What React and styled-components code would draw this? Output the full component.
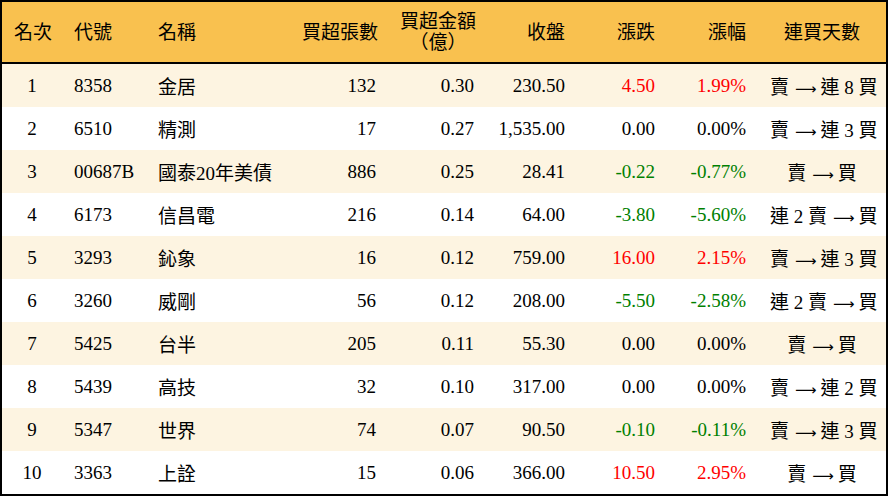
import React from 'react'
import styled, { createGlobalStyle } from 'styled-components'

const GlobalStyle = createGlobalStyle`
  html, body {
    margin: 0;
    padding: 0;
    background: #fff;
  }
  body {
    font-family: "Liberation Serif", "Noto Sans CJK TC", serif;
  }
`

const Frame = styled.div`
  box-sizing: border-box;
  width: 888px;
  height: 496px;
  border: 2px solid #000;
  background: #fff;
`

const Table = styled.table`
  width: 100%;
  table-layout: fixed;
  border-collapse: separate;
  border-spacing: 0;
  font-size: 19px;
  color: #000;
`

const Th = styled.th`
  height: 60px;
  padding: 0 12px;
  background: #f9c14f;
  border-bottom: 2px solid #000;
  font-weight: normal;
  line-height: 21px;
  text-align: ${p => p.$align || 'left'};
  vertical-align: middle;
  white-space: nowrap;
`

const Stack = styled.span`
  display: inline-block;
  text-align: center;
`

const Tr = styled.tr`
  background: ${p => (p.$shaded ? '#fdf4e1' : '#fff')};
`

const Td = styled.td`
  height: 43px;
  padding: 0 12px;
  text-align: ${p => p.$align || 'left'};
  vertical-align: middle;
  white-space: nowrap;
  color: ${p => p.$tone === 'up' ? '#ff0000' : p.$tone === 'down' ? '#008000' : '#000'};
`

const Arrow = styled.span`
  font-family: "DejaVu Sans", sans-serif;
  font-size: 15px;
  margin: 0 4px 0 6px;
`

const widths = [60, 84, 144, 98, 98, 91, 90, 91, 128]

const rows = [
  ['1', '8358', '金居', '132', '0.30', '230.50', '4.50', '1.99%', '賣', '連 8 買'],
  ['2', '6510', '精測', '17', '0.27', '1,535.00', '0.00', '0.00%', '賣', '連 3 買'],
  ['3', '00687B', '國泰20年美債', '886', '0.25', '28.41', '-0.22', '-0.77%', '賣', '買'],
  ['4', '6173', '信昌電', '216', '0.14', '64.00', '-3.80', '-5.60%', '連 2 賣', '買'],
  ['5', '3293', '鈊象', '16', '0.12', '759.00', '16.00', '2.15%', '賣', '連 3 買'],
  ['6', '3260', '威剛', '56', '0.12', '208.00', '-5.50', '-2.58%', '連 2 賣', '買'],
  ['7', '5425', '台半', '205', '0.11', '55.30', '0.00', '0.00%', '賣', '買'],
  ['8', '5439', '高技', '32', '0.10', '317.00', '0.00', '0.00%', '賣', '連 2 買'],
  ['9', '5347', '世界', '74', '0.07', '90.50', '-0.10', '-0.11%', '賣', '連 3 買'],
  ['10', '3363', '上詮', '15', '0.06', '366.00', '10.50', '2.95%', '賣', '買'],
]

const tone = v => (v.startsWith('-') ? 'down' : parseFloat(v) > 0 ? 'up' : null)

export default function App () {
  return (
    <>
      <GlobalStyle />
      <Frame>
        <Table>
          <colgroup>
            {widths.map((w, i) => <col key={i} style={{ width: w }} />)}
          </colgroup>
          <thead>
            <tr>
              <Th $align='center'>名次</Th>
              <Th>代號</Th>
              <Th>名稱</Th>
              <Th $align='right'>買超張數</Th>
              <Th $align='right'><Stack>買超金額<br />（億）</Stack></Th>
              <Th $align='right'>收盤</Th>
              <Th $align='right'>漲跌</Th>
              <Th $align='right'>漲幅</Th>
              <Th $align='center'>連買天數</Th>
            </tr>
          </thead>
          <tbody>
            {rows.map((r, i) => (
              <Tr key={r[0]} $shaded={i % 2 === 0}>
                <Td $align='center'>{r[0]}</Td>
                <Td>{r[1]}</Td>
                <Td>{r[2]}</Td>
                <Td $align='right'>{r[3]}</Td>
                <Td $align='right'>{r[4]}</Td>
                <Td $align='right'>{r[5]}</Td>
                <Td $align='right' $tone={tone(r[6])}>{r[6]}</Td>
                <Td $align='right' $tone={tone(r[7])}>{r[7]}</Td>
                <Td $align='center'>{r[8]}<Arrow>⟶</Arrow>{r[9]}</Td>
              </Tr>
            ))}
          </tbody>
        </Table>
      </Frame>
    </>
  )
}
